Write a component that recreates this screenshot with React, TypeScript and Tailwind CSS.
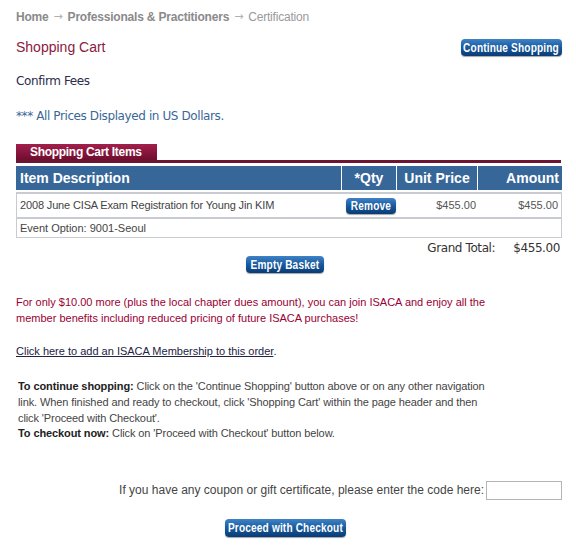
import React from "react";

function Btn({ children, className = "" }: { children: React.ReactNode; className?: string }) {
  return (
    <span
      className={
        "inline-flex items-center justify-center whitespace-nowrap rounded-[4px] bg-gradient-to-b from-[#3f82c6] via-[#175a9e] to-[#0a3b75] text-white font-bold leading-none shadow-[0_1px_1px_rgba(0,0,0,0.35)] [font-family:'Liberation_Sans',Arial,sans-serif] " +
        className
      }
    >
      <span className="inline-block scale-x-[0.84] tracking-[0.2px]">{children}</span>
    </span>
  );
}

export default function App() {
  return (
    <div className="w-[576px] h-[549px] bg-white overflow-hidden [font-family:'Liberation_Sans',Arial,sans-serif] text-[12px] text-[#333]">
      <div className="pl-4 pr-[15px] pt-[10px]">
        {/* breadcrumb */}
        <div className="h-[14px] leading-[14px] text-[12px] text-[#8a8a8a] flex items-center tracking-[-0.2px] whitespace-nowrap">
          <span className="font-bold">Home</span>
          <span className="mx-[5px] text-[#b0b0b0] [font-family:'DejaVu_Sans',sans-serif] text-[11px]">→</span>
          <span className="font-bold">Professionals &amp; Practitioners</span>
          <span className="mx-[5px] text-[#b0b0b0] [font-family:'DejaVu_Sans',sans-serif] text-[11px]">→</span>
          <span className="text-[#9a9a9a]">Certification</span>
        </div>

        {/* title row */}
        <div className="mt-[15px] flex items-center justify-between h-[17px]">
          <div className="text-[14px] text-[#8b1a3e]">Shopping Cart</div>
          <Btn className="w-[101px] h-[17px] text-[12px] mr-[-1px]">Continue Shopping</Btn>
        </div>

        <div className="mt-[18px] text-[12px] text-[#2b2b4b] [font-family:'DejaVu_Sans',sans-serif] tracking-[-0.4px] leading-[14px]">Confirm Fees</div>

        <div className="mt-[21px] text-[12px] text-[#3a6798] [font-family:'DejaVu_Sans',sans-serif] tracking-[-0.4px] leading-[14px]">
          *** All Prices Displayed in US Dollars.
        </div>

        {/* tab */}
        <div className="mt-[21px]">
          <div className="w-[141px] h-[16px] bg-gradient-to-b from-[#a31f4c] to-[#6e0e2f] text-white font-bold text-[12px] leading-[16px] pl-[14px] tracking-[-0.3px] whitespace-nowrap">
            Shopping Cart Items
          </div>
          <div className="h-[3px] bg-[#6b1530]" />
        </div>

        {/* table */}
        <div className="mt-[3px] w-[546px]">
          <div className="flex h-[24px] bg-[#376699] text-white font-bold text-[14px] whitespace-nowrap">
            <div className="w-[326px] pl-[4px] flex items-center border-r border-white">Item Description</div>
            <div className="w-[55px] flex items-center justify-center border-r border-white">*Qty</div>
            <div className="w-[81px] flex items-center justify-center border-r border-white">Unit Price</div>
            <div className="flex-1 flex items-center justify-end pr-[3px]">Amount</div>
          </div>
          <div className="mt-[2px] border-t-2 border-x border-[#c8ccd2] flex h-[25px] items-center text-[11px] text-[#444]">
            <div className="w-[326px] pl-[3px] tracking-[-0.15px]">2008 June CISA Exam Registration for Young Jin KIM</div>
            <div className="w-[55px] flex justify-center">
              <Btn className="w-[50px] h-[16px] text-[12px]">Remove</Btn>
            </div>
            <div className="w-[81px] text-right pr-[3px] text-[#555]">$455.00</div>
            <div className="flex-1 text-right pr-[3px] text-[#555]">$455.00</div>
          </div>
          <div className="border-t-2 border-x border-b border-[#c8ccd2] h-[21px] flex items-center pl-[3px] text-[11px] text-[#444]">
            Event Option: 9001-Seoul
          </div>
          <div className="flex justify-end h-[18px] items-center mt-[1px] text-[12px] text-[#333] [font-family:'DejaVu_Sans',sans-serif] tracking-[-0.4px]">
            <span className="mr-[18px]">Grand Total:</span>
            <span className="pr-[2px]">$455.00</span>
          </div>
        </div>

        <div className="mt-[-1px] flex justify-center pr-[7px]">
          <Btn className="w-[78px] h-[17px] text-[12px]">Empty Basket</Btn>
        </div>

        <p className="mt-[21px] w-[490px] text-[11px] leading-[16px] text-[#990033]">
          For only $10.00 more (plus the local chapter dues amount), you can join ISACA and enjoy all the member benefits including reduced pricing of future ISACA purchases!
        </p>

        <p className="mt-[18px] text-[11px] leading-[14px] text-[#222244]">
          <span className="underline">Click here to add an ISACA Membership to this order</span>.
        </p>

        <div className="mt-[20px] pl-[2px] w-[476px] text-[11px] leading-[16px] text-[#444] tracking-[-0.1px]">
          <p>
            <b className="text-[#222]">To continue shopping: </b>Click on the 'Continue Shopping' button above or on any other navigation link. When finished and ready to checkout, click 'Shopping Cart' within the page header and then click 'Proceed with Checkout'.
          </p>
          <p className="leading-[14px]">
            <b className="text-[#222]">To checkout now: </b>Click on 'Proceed with Checkout' button below.
          </p>
        </div>

        <div className="mt-[40px] flex items-center justify-end h-[20px]">
          <span className="text-[12px] text-[#444] mr-[2px]">If you have any coupon or gift certificate, please enter the code here:</span>
          <input className="w-[76px] h-[19px] border border-[#b5b5b5] outline-none mr-[-1px]" />
        </div>

        <div className="mt-[19px] flex justify-center pr-[7px]">
          <Btn className="w-[121px] h-[18px] text-[12px]">Proceed with Checkout</Btn>
        </div>
      </div>
    </div>
  );
}
